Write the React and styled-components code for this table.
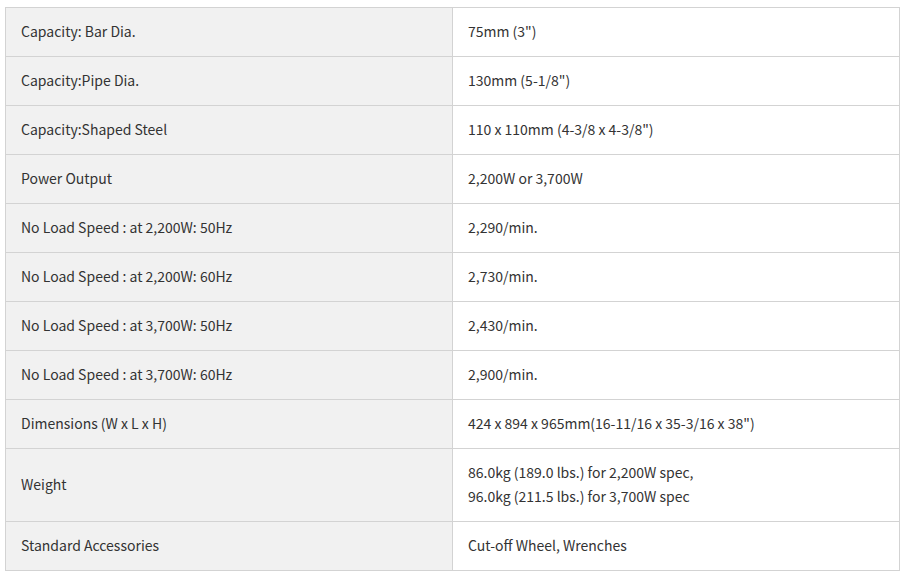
import React from "react";
import styled, { createGlobalStyle } from "styled-components";

const Global = createGlobalStyle`
  html, body { margin: 0; padding: 0; background: #fff; }
  body { font-family: "Noto Sans CJK KR", "Noto Sans", sans-serif; }
`;

const Wrap = styled.div`
  padding: 7px 2px 0 5px;
`;

const Table = styled.table`
  width: 895px;
  border-collapse: collapse;
  table-layout: fixed;
  border: 1px solid #d3d3d3;
`;

const Cell = styled.td`
  border: 1px solid #d3d3d3;
  padding: 11px 15px 13px;
  font-size: 14px;
  line-height: 24px;
  color: #333;
  vertical-align: middle;
  background: ${(p) => (p.$head ? "#f1f1f1" : "#fff")};
  width: ${(p) => (p.$head ? "416px" : "auto")};
`;

const rows = [
  ["Capacity: Bar Dia.", ["75mm (3\")"]],
  ["Capacity:Pipe Dia.", ["130mm (5-1/8\")"]],
  ["Capacity:Shaped Steel", ["110 x 110mm (4-3/8 x 4-3/8\")"]],
  ["Power Output", ["2,200W or 3,700W"]],
  ["No Load Speed : at 2,200W: 50Hz", ["2,290/min."]],
  ["No Load Speed : at 2,200W: 60Hz", ["2,730/min."]],
  ["No Load Speed : at 3,700W: 50Hz", ["2,430/min."]],
  ["No Load Speed : at 3,700W: 60Hz", ["2,900/min."]],
  ["Dimensions (W x L x H)", ["424 x 894 x 965mm(16-11/16 x 35-3/16 x 38\")"]],
  ["Weight", ["86.0kg (189.0 lbs.) for 2,200W spec,", "96.0kg (211.5 lbs.) for 3,700W spec"]],
  ["Standard Accessories", ["Cut-off Wheel, Wrenches"]],
];

export default function App() {
  return (
    <>
      <Global />
      <Wrap>
        <Table>
          <tbody>
            {rows.map(([k, v]) => (
              <tr key={k}>
                <Cell $head>{k}</Cell>
                <Cell>
                  {v.map((line, i) => (
                    <React.Fragment key={i}>
                      {i > 0 && <br />}
                      {line}
                    </React.Fragment>
                  ))}
                </Cell>
              </tr>
            ))}
          </tbody>
        </Table>
      </Wrap>
    </>
  );
}
